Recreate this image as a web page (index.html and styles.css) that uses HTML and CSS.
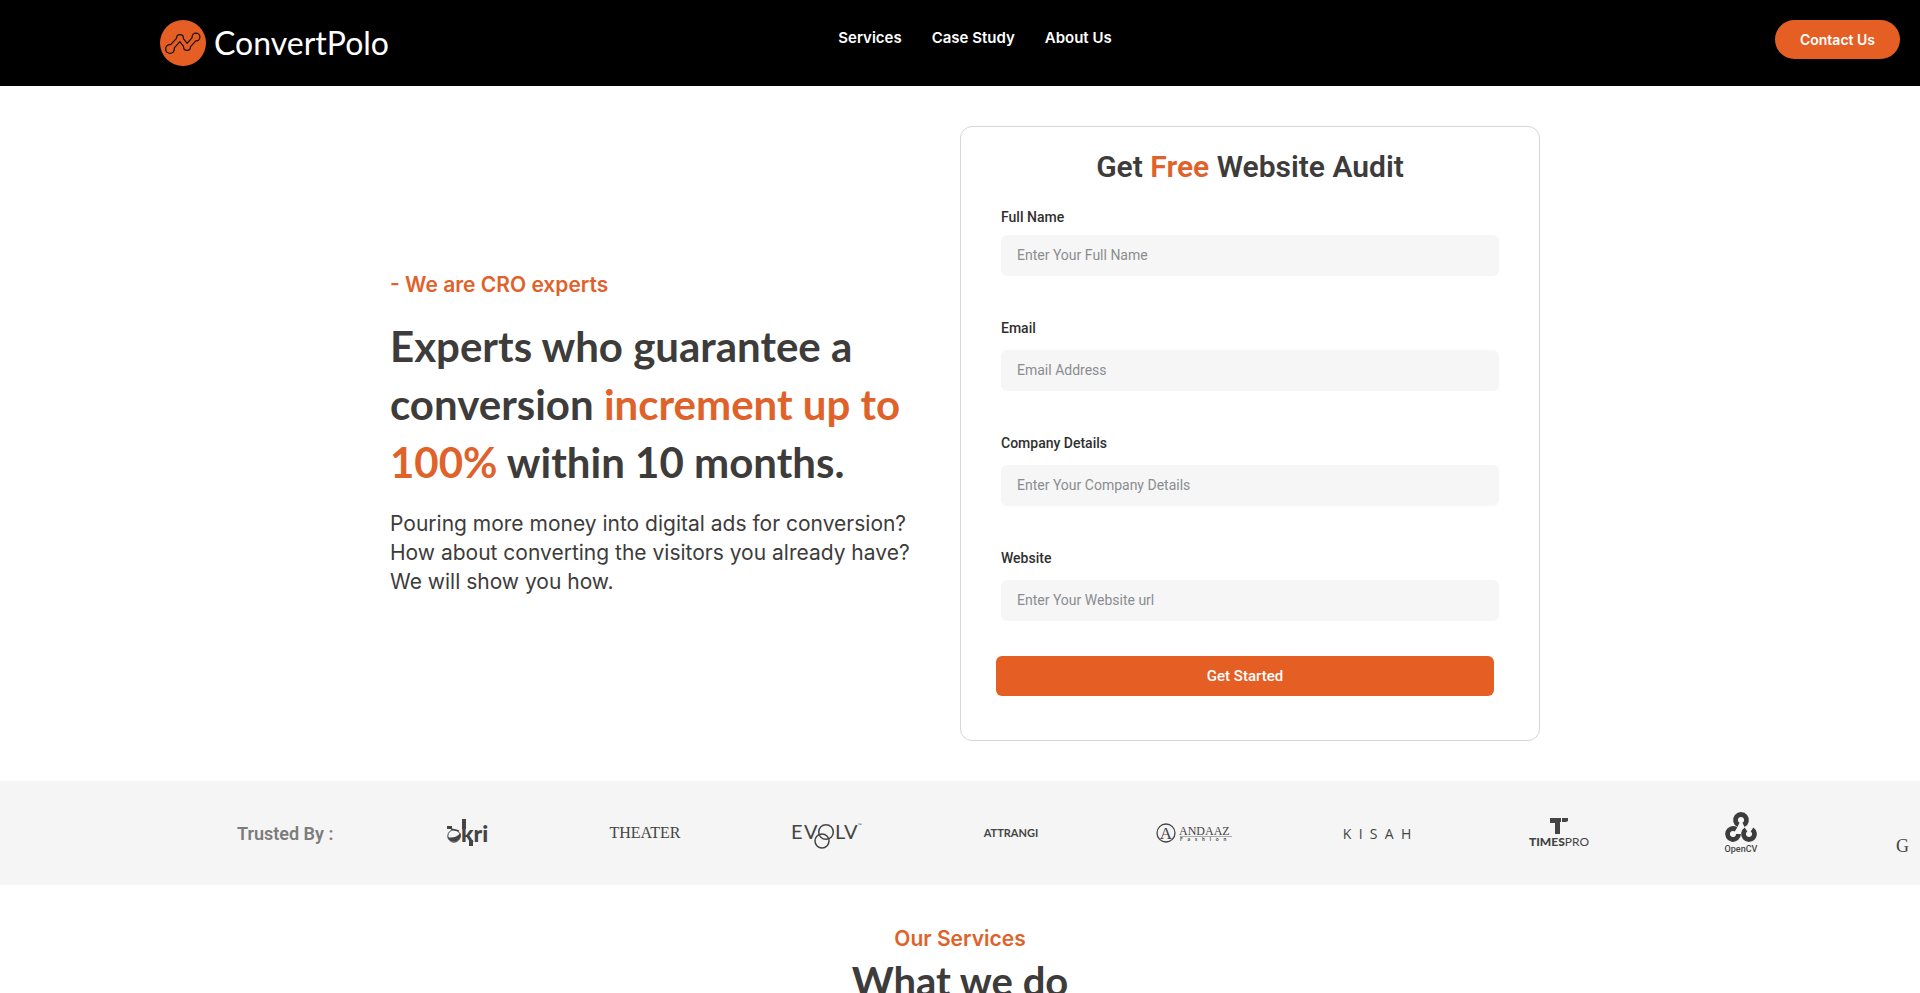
FILE: index.html
```
<!DOCTYPE html>
<html lang="en">
<head>
	<meta charset="utf-8">
	<meta name="viewport" content="width=device-width, initial-scale=1">
	<title>ConvertPolo</title>

	<link rel="stylesheet" href="styles.css">
</head>
<body>

	<header class="header">
		<a class="logo" href="#">
			<svg width="46" height="46" viewBox="0 0 46 46" aria-hidden="true">
				<circle cx="23" cy="23" r="23" fill="#e55f25"/>
				<g stroke-linecap="round" stroke-linejoin="round" fill="none">
					<path d="M10 29 L20 18 L27 27 L36 17" stroke="#1c0d06" stroke-width="6"/>
					<g fill="#1c0d06">
						<circle cx="10" cy="29" r="5"/>
						<circle cx="20" cy="18" r="4"/>
						<circle cx="27" cy="27" r="4"/>
						<circle cx="36" cy="17" r="4.500"/>
					</g>
					<path d="M10 29 L20 18 L27 27 L36 17" stroke="#e55f25" stroke-width="3.600"/>
					<g fill="#e55f25">
						<circle cx="10" cy="29" r="3.700"/>
						<circle cx="20" cy="18" r="2.800"/>
						<circle cx="27" cy="27" r="2.800"/>
						<circle cx="36" cy="17" r="3.300"/>
					</g>
				</g>
			</svg>
			<span>ConvertPolo</span>
		</a>
		<nav class="nav">
			<a href="#services">Services</a>
			<a href="#case-study">Case Study</a>
			<a href="#about">About Us</a>
		</nav>
		<a class="contact" href="#contact">Contact Us</a>
	</header>

	<main>
		<section class="hero">
			<div class="intro">
				<p class="eyebrow">- We are CRO experts</p>
				<h1 class="title">Experts who guarantee a<br>conversion <span class="orange">increment up to<br>100%</span> within 10 months.</h1>
				<p class="lead">Pouring more money into digital ads for conversion?<br>How about converting the visitors you already have?<br>We will show you how.</p>
			</div>

			<form class="audit">
				<h2>Get <span class="orange">Free</span> Website Audit</h2>
				<div class="field first">
					<label for="name">Full Name</label>
					<input id="name" type="text" placeholder="Enter Your Full Name">
				</div>
				<div class="field">
					<label for="email">Email</label>
					<input id="email" type="email" placeholder="Email Address">
				</div>
				<div class="field">
					<label for="company">Company Details</label>
					<input id="company" type="text" placeholder="Enter Your Company Details">
				</div>
				<div class="field">
					<label for="website">Website</label>
					<input id="website" type="text" placeholder="Enter Your Website url">
				</div>
				<button type="submit">Get Started</button>
			</form>
		</section>

		<section class="trusted">
			<p>Trusted By :</p>
			<div class="brands">
				<svg viewBox="0 0 182 60" role="img" aria-label="okri">
					<rect x="71" y="23" width="5" height="3"/>
					<circle cx="78" cy="33" r="6.200" fill="none" stroke="#444" stroke-width="1"/>
					<path d="M71.500 34 Q79 36 84.500 30 A6.800 6.800 0 0 1 71.500 34Z"/>
					<path d="M75 26 L83 28" stroke="#444" stroke-width="1.500"/>
					<text x="85" y="39" class="okri">kri</text>
					<rect x="86" y="16" width="4" height="10"/>
					<path d="M93 37h4v6h-4z"/>
				</svg>
				<svg viewBox="0 0 182 60" role="img" aria-label="Theater">
					<text x="87" y="35" class="theater">THEATER</text>
				</svg>
				<svg viewBox="0 0 182 60" role="img" aria-label="Evolv">
					<g class="evolv">
						<text x="51" y="36">E</text>
						<text x="64" y="36">V</text>
						<text x="95" y="36">L</text>
						<text x="104" y="36">V</text>
					</g>
					<g fill="none" stroke="#444" stroke-width="1.500">
						<circle cx="86" cy="29" r="7.300"/>
						<circle cx="82" cy="38" r="7"/>
					</g>
					<text x="118" y="24" class="tm">™</text>
				</svg>
				<svg viewBox="0 0 182 60" role="img" aria-label="Attrangi">
					<text x="89" y="34" class="attrangi">ATTRANGI</text>
				</svg>
				<svg viewBox="0 0 182 60" role="img" aria-label="Andaaz Fashion">
					<circle cx="62" cy="30" r="9" fill="none" stroke="#444" stroke-width="1.300"/>
					<text x="62" y="36" class="andaaz-a">A</text>
					<text x="75" y="32" class="andaaz">ANDAAZ</text>
					<path d="M76 33.500h52" stroke="#777" stroke-width=".6"/>
					<text x="76" y="38" class="fashion">F&#160;&#160;&#160;&#160;a&#160;&#160;&#160;&#160;s&#160;&#160;&#160;&#160;h&#160;&#160;&#160;&#160;i&#160;&#160;&#160;&#160;o&#160;&#160;&#160;&#160;n</text>
				</svg>
				<svg viewBox="0 0 182 60" role="img" aria-label="Kisah">
					<text x="91" y="36" class="kisah">K&#160; I&#160; S&#160; A&#160; H</text>
				</svg>
				<svg viewBox="0 0 182 60" role="img" aria-label="TimesPro">
					<path d="M82 15h11v4h-1v12h-5V20h-5v-3zM94 15h6v3l-2 1h-4z"/>
					<text x="91" y="43" class="times"><tspan class="times-bold">TIMES</tspan>PRO</text>
				</svg>
				<svg viewBox="0 0 182 60" role="img" aria-label="OpenCV">
					<g fill="none" stroke="#3c3c3c" stroke-width="4.800">
						<path d="M88.500 21.900 A5.500 5.500 0 1 1 93.500 21.900"/>
						<path d="M86 26.400 A5.500 5.500 0 1 0 88.500 31"/>
						<path d="M96 26.400 A5.500 5.500 0 1 0 102 26.400"/>
					</g>
					<text x="91" y="49" class="opencv">OpenCV</text>
				</svg>
				<svg viewBox="0 0 182 60" role="img" aria-label="G">
					<text x="64" y="49" class="g-brand">G</text>
				</svg>
			</div>
		</section>

		<section class="services" id="services">
			<p class="eyebrow">Our Services</p>
			<h2 class="title">What we do</h2>
		</section>
	</main>

</body>
</html>
```
FILE: styles.css
```
*{
	box-sizing: border-box;
}

body{
	margin: 0;
	background: #fff;
	color: #3d3c3b;
	font-family: Roboto, sans-serif;
}

h1, h2, p{
	margin: 0;
}

a{
	color: #fff;
	text-decoration: none;
}

.orange{
	color: #e0622b;
}

/* header */
.header{
	display: grid;
	grid-template-columns: 1fr auto 1fr;
	align-items: start;
	padding: 20px 20px 20px 50px;
	background: #000;
}

.logo{
	display: flex;
	align-items: center;
	gap: 8px;
	margin-left: 110px;
	font-family: Lato, sans-serif;
	font-size: 32px;
	line-height: 46px;
}

.nav{
	display: flex;
	gap: 30px;
	font-family: Inter, sans-serif;
	font-size: 15px;
	font-weight: 600;
	line-height: 36px;
}

.contact{
	justify-self: end;
	padding: 0 25px;
	border-radius: 20px;
	background: #e55f25;
	font-family: Inter, sans-serif;
	font-size: 14px;
	font-weight: 600;
	line-height: 39px;
}

/* hero */
.hero{
	display: grid;
	grid-template-columns: 1fr 1fr;
	align-items: center;
	max-width: 1160px;
	margin: 0 auto;
	padding: 40px 0;
}

.intro{
	padding: 0 10px;
}

.eyebrow{
	color: #e0622b;
	font-family: Inter, sans-serif;
	font-size: 21px;
	font-weight: 600;
	line-height: 28px;
}

.title{
	font-family: Lato, sans-serif;
	font-size: 42px;
	font-weight: 700;
	line-height: 58px;
}

.intro .title{
	margin: 18px 0;
}

.lead{
	font-family: Inter, sans-serif;
	font-size: 21px;
	line-height: 29px;
}

/* form */
.audit{
	padding: 22px 40px 44px;
	border: 1px solid #d6d6d6;
	border-radius: 12px;
}

.audit h2{
	margin-bottom: 22px;
	font-size: 30px;
	font-weight: 600;
	line-height: 36px;
	text-align: center;
}

.field{
	display: flex;
	flex-direction: column;
	gap: 12px;
	margin-bottom: 42px;
}

.field.first{
	gap: 8px;
}

.field label{
	color: #2f2f2f;
	font-size: 14px;
	font-weight: 500;
	line-height: 20px;
}

.field input{
	height: 41px;
	padding: 0 16px 2px;
	border: 0;
	border-radius: 6px;
	background: #f6f6f7;
	font-family: Roboto, sans-serif;
	font-size: 14px;
}

.field input::placeholder{
	color: #8a8d90;
}

.audit button{
	width: 100%;
	height: 40px;
	margin: -7px 0 0 -5px;
	border: 0;
	border-radius: 6px;
	background: #e55f25;
	color: #fff;
	font-family: Roboto, sans-serif;
	font-size: 15px;
	font-weight: 500;
}

/* brands */
.trusted{
	display: flex;
	align-items: center;
	padding: 22px 10px 22px 237px;
	background: #f5f5f5;
}

.trusted p{
	flex: 0 0 139px;
	color: #7c7c7c;
	font-size: 18px;
	font-weight: 600;
}

.brands{
	display: flex;
	flex: 1;
	min-width: 0;
	overflow: hidden;
}

.brands svg{
	flex: 0 0 182px;
	height: 60px;
	fill: #444;
	font-family: Lato, sans-serif;
}

.okri{
	font-size: 23px;
	font-weight: 900;
}

.theater{
	font-family: "Liberation Serif", serif;
	font-size: 16px;
	text-anchor: middle;
}

.evolv{
	font-size: 20px;
}

.tm{
	font-size: 5px;
}

.attrangi{
	font-size: 11px;
	font-weight: 700;
	text-anchor: middle;
}

.andaaz-a{
	font-family: "Liberation Serif", serif;
	font-size: 17px;
	text-anchor: middle;
}

.andaaz{
	font-family: "Liberation Serif", serif;
	font-size: 12px;
}

.fashion{
	font-size: 5px;
	font-weight: 700;
}

.kisah{
	font-family: "Open Sans", sans-serif;
	font-size: 14px;
	text-anchor: middle;
}

.times{
	font-size: 12px;
	text-anchor: middle;
}

.times-bold{
	font-weight: 900;
}

.opencv{
	font-family: Roboto, sans-serif;
	font-size: 9px;
	font-weight: 500;
	text-anchor: middle;
}

.g-brand{
	font-family: "Liberation Serif", serif;
	font-size: 18px;
}

/* services */
.services{
	padding: 40px 20px 0;
	text-align: center;
}

.services .title{
	font-size: 40px;
	line-height: 56px;
}
```
